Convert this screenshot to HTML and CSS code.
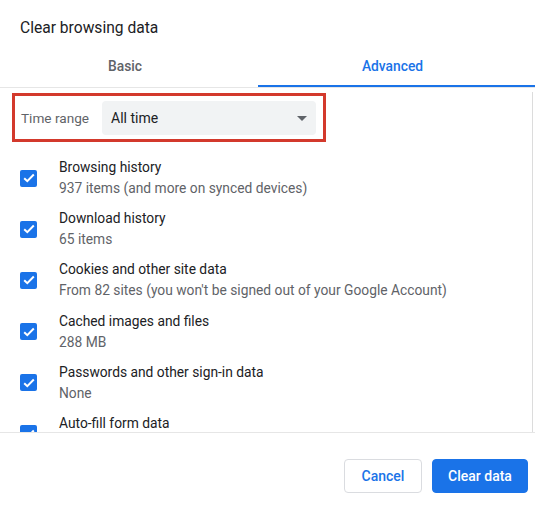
FILE: index.html
```html
<!DOCTYPE html>
<html>
<head>
<meta charset="utf-8">
<link rel="stylesheet" href="styles.css">
</head>
<body>
<div class="dialog">
  <div class="title">Clear browsing data</div>
  <div class="tabs">
    <div class="tab tab-basic">Basic</div>
    <div class="tab tab-active">Advanced</div>
  </div>
  <div class="content">
    <div class="scrollbar"></div>
    <div class="range-box">
      <span class="range-label">Time range</span>
      <div class="select">
        <span>All time</span>
        <svg class="arrow" width="10" height="5" viewBox="0 0 10 5"><path d="M0 0h10L5 5z" fill="#5f6368"/></svg>
      </div>
    </div>
    <div class="list">
      <div class="row">
        <span class="cb"><svg width="12" height="10" viewBox="0 0 12 10"><path d="M1.2 5.2l3.1 3 6.5-6.7" fill="none" stroke="#fff" stroke-width="2"/></svg></span>
        <div class="texts"><div class="t">Browsing history</div><div class="s">937 items (and more on synced devices)</div></div>
      </div>
      <div class="row">
        <span class="cb"><svg width="12" height="10" viewBox="0 0 12 10"><path d="M1.2 5.2l3.1 3 6.5-6.7" fill="none" stroke="#fff" stroke-width="2"/></svg></span>
        <div class="texts"><div class="t">Download history</div><div class="s">65 items</div></div>
      </div>
      <div class="row">
        <span class="cb"><svg width="12" height="10" viewBox="0 0 12 10"><path d="M1.2 5.2l3.1 3 6.5-6.7" fill="none" stroke="#fff" stroke-width="2"/></svg></span>
        <div class="texts"><div class="t">Cookies and other site data</div><div class="s">From 82 sites (you won't be signed out of your Google Account)</div></div>
      </div>
      <div class="row">
        <span class="cb"><svg width="12" height="10" viewBox="0 0 12 10"><path d="M1.2 5.2l3.1 3 6.5-6.7" fill="none" stroke="#fff" stroke-width="2"/></svg></span>
        <div class="texts"><div class="t">Cached images and files</div><div class="s">288 MB</div></div>
      </div>
      <div class="row">
        <span class="cb"><svg width="12" height="10" viewBox="0 0 12 10"><path d="M1.2 5.2l3.1 3 6.5-6.7" fill="none" stroke="#fff" stroke-width="2"/></svg></span>
        <div class="texts"><div class="t">Passwords and other sign-in data</div><div class="s">None</div></div>
      </div>
      <div class="row">
        <span class="cb"><svg width="12" height="10" viewBox="0 0 12 10"><path d="M1.2 5.2l3.1 3 6.5-6.7" fill="none" stroke="#fff" stroke-width="2"/></svg></span>
        <div class="texts"><div class="t">Auto-fill form data</div><div class="s">&nbsp;</div></div>
      </div>
    </div>
  </div>
  <div class="footer">
    <button class="btn btn-cancel">Cancel</button>
    <button class="btn btn-primary">Clear data</button>
  </div>
</div>
</body>
</html>
```
FILE: styles.css
```css
html, body {
  margin: 0;
  padding: 0;
  background: #fff;
}
body {
  font-family: Roboto, "Liberation Sans", Arial, sans-serif;
  color: #202124;
  width: 535px;
  height: 510px;
  overflow: hidden;
}
.dialog {
  width: 535px;
  height: 510px;
  display: flex;
  flex-direction: column;
}
.title {
  height: 46px;
  box-sizing: border-box;
  padding: 18px 0 0 20px;
  font-size: 15.6px;
  line-height: 20px;
  color: #202124;
}
.tabs {
  display: flex;
  height: 42px;
  box-sizing: border-box;
  border-bottom: 1px solid #e6e6e6;
}
.tab {
  box-sizing: border-box;
  font-size: 13.8px;
  font-weight: 500;
  line-height: 16px;
  padding-top: 12px;
  text-align: center;
}
.tab-basic {
  width: 258px;
  padding-right: 8px;
  color: #5f6368;
}
.tab-active {
  flex: 1;
  padding-right: 8px;
  color: #1a73e8;
  border-bottom: 2px solid #1a73e8;
  margin-bottom: -1px;
  height: 41px;
}
.content {
  position: relative;
  height: 345px;
  box-sizing: border-box;
  border-bottom: 1px solid #e6e6e6;
  overflow: hidden;
}
.scrollbar {
  position: absolute;
  right: 2px;
  top: 4px;
  bottom: 0;
  width: 1px;
  background: #dcdcdc;
}
.range-box {
  margin: 5px 0 0 12px;
  width: 314px;
  height: 49px;
  box-sizing: border-box;
  border: 3px solid #d3392c;
  display: flex;
  align-items: center;
  padding: 1px 7px 0 6px;
}
.range-label {
  font-size: 13.6px;
  color: #5f6368;
  width: 81px;
  flex: none;
}
.select {
  flex: 1;
  height: 34px;
  background: #f1f3f4;
  border-radius: 4px;
  display: flex;
  align-items: center;
  justify-content: space-between;
  padding: 0 9px 0 9px;
  font-size: 14px;
  color: #202124;
}
.arrow {
  display: block;
}
.list {
  margin-top: 15px;
  padding-left: 20px;
  display: flex;
  flex-direction: column;
  gap: 9.2px;
}
.row {
  display: flex;
  align-items: center;
}
.cb {
  width: 17px;
  height: 17px;
  border-radius: 2px;
  background: #1a73e8;
  display: flex;
  align-items: center;
  justify-content: center;
  flex: none;
  margin-right: 22px;
}
.cb svg {
  display: block;
}
.texts {
  font-size: 13.8px;
  line-height: 21px;
}
.t {
  color: #202124;
}
.s {
  color: #5f6368;
}
.footer {
  flex: 1;
  display: flex;
  justify-content: flex-end;
  align-items: flex-start;
  padding: 26px 7px 0 0;
  gap: 10px;
}
.btn {
  font-family: Roboto, "Liberation Sans", Arial, sans-serif;
  font-size: 14px;
  font-weight: 500;
  height: 34px;
  border-radius: 4px;
  box-sizing: border-box;
  cursor: pointer;
}
.btn-cancel {
  width: 78px;
  background: #fff;
  color: #1a73e8;
  border: 1px solid #dadce0;
}
.btn-primary {
  width: 96px;
  background: #1a73e8;
  color: #fff;
  border: 1px solid #1a73e8;
}
```
